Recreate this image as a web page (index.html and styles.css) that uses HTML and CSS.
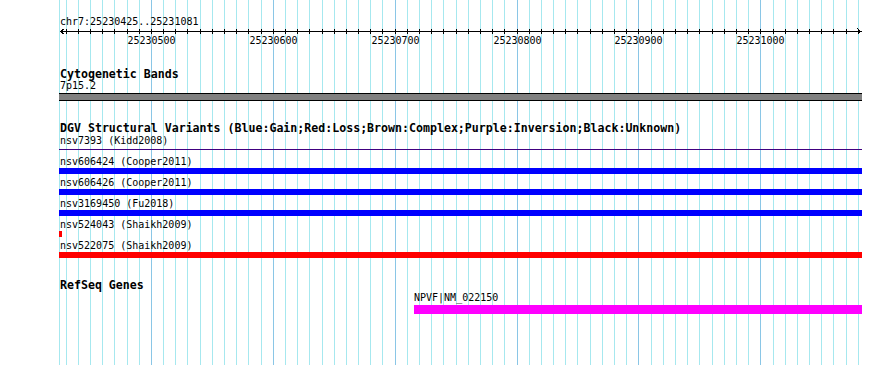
FILE: index.html
```html
<!DOCTYPE html>
<html lang="en">
<head>
    <meta charset="UTF-8">
    <title>chr7:25230425..25231081</title>
    <link rel="stylesheet" href="styles.css">
</head>
<body>
    <div class="view">
        <!-- grid behind all tracks, one line per 10 bp -->
        <svg class="grid" width="890" height="365">
            <path class="minor" d="M59.5 0V365M66.5 0V365M78.5 0V365M90.5 0V365M102.5 0V365M114.5 0V365M127.5 0V365M139.5 0V365M163.5 0V365M175.5 0V365M187.5 0V365M200.5 0V365M212.5 0V365M224.5 0V365M236.5 0V365M248.5 0V365M261.5 0V365M285.5 0V365M297.5 0V365M309.5 0V365M322.5 0V365M334.5 0V365M346.5 0V365M358.5 0V365M370.5 0V365M382.5 0V365M407.5 0V365M419.5 0V365M431.5 0V365M443.5 0V365M456.5 0V365M468.5 0V365M480.5 0V365M492.5 0V365M504.5 0V365M529.5 0V365M541.5 0V365M553.5 0V365M565.5 0V365M577.5 0V365M590.5 0V365M602.5 0V365M614.5 0V365M626.5 0V365M651.5 0V365M663.5 0V365M675.5 0V365M687.5 0V365M699.5 0V365M712.5 0V365M724.5 0V365M736.5 0V365M748.5 0V365M773.5 0V365M785.5 0V365M797.5 0V365M809.5 0V365M821.5 0V365M833.5 0V365M846.5 0V365M858.5 0V365"/>
            <path class="major" d="M151.5 0V365M273.5 0V365M395.5 0V365M517.5 0V365M638.5 0V365M760.5 0V365"/>
        </svg>

        <div class="tracks">
            <div class="locus">chr7:25230425..25231081</div>

            <svg class="ruler" width="803" height="18">
                <path d="M1 3.5H803"/>
                <path d="M7.5 1V6M19.5 1V6M31.5 1V6M43.5 1V6M55.5 1V6M68.5 1V6M80.5 1V6M92.5 1V6M104.5 1V6M116.5 1V6M128.5 1V6M141.5 1V6M153.5 1V6M165.5 1V6M177.5 1V6M189.5 1V6M202.5 1V6M214.5 1V6M226.5 1V6M238.5 1V6M250.5 1V6M263.5 1V6M275.5 1V6M287.5 1V6M299.5 1V6M311.5 1V6M323.5 1V6M336.5 1V6M348.5 1V6M360.5 1V6M372.5 1V6M384.5 1V6M397.5 1V6M409.5 1V6M421.5 1V6M433.5 1V6M445.5 1V6M458.5 1V6M470.5 1V6M482.5 1V6M494.5 1V6M506.5 1V6M518.5 1V6M531.5 1V6M543.5 1V6M555.5 1V6M567.5 1V6M579.5 1V6M592.5 1V6M604.5 1V6M616.5 1V6M628.5 1V6M640.5 1V6M653.5 1V6M665.5 1V6M677.5 1V6M689.5 1V6M701.5 1V6M714.5 1V6M726.5 1V6M738.5 1V6M750.5 1V6M762.5 1V6M774.5 1V6M787.5 1V6M799.5 1V6"/>
                <polyline points="5.5,0.5 1.5,3.5 5.5,6.5"/>
                <polyline points="798.5,0.5 801.5,3.5 798.5,6.5"/>
                <text x="92.5" y="16">25230500</text>
                <text x="214.5" y="16">25230600</text>
                <text x="336.5" y="16">25230700</text>
                <text x="458.5" y="16">25230800</text>
                <text x="579.5" y="16">25230900</text>
                <text x="701.5" y="16">25231000</text>
            </svg>

            <section class="track cyto">
                <h2 class="track-title">Cytogenetic Bands</h2>
                <div class="feat-label">7p15.2</div>
                <div class="band"></div>
            </section>

            <section class="track dgv">
                <h2 class="track-title">DGV Structural Variants (Blue:Gain;Red:Loss;Brown:Complex;Purple:Inversion;Black:Unknown)</h2>
                <div class="variant">
                    <div class="feat-label">nsv7393 (Kidd2008)</div>
                    <div class="bar inversion"></div>
                </div>
                <div class="variant">
                    <div class="feat-label">nsv606424 (Cooper2011)</div>
                    <div class="bar gain"></div>
                </div>
                <div class="variant">
                    <div class="feat-label">nsv606426 (Cooper2011)</div>
                    <div class="bar gain"></div>
                </div>
                <div class="variant">
                    <div class="feat-label">nsv3169450 (Fu2018)</div>
                    <div class="bar gain"></div>
                </div>
                <div class="variant">
                    <div class="feat-label">nsv524043 (Shaikh2009)</div>
                    <div class="bar loss" style="width: 3px"></div>
                </div>
                <div class="variant">
                    <div class="feat-label">nsv522075 (Shaikh2009)</div>
                    <div class="bar loss"></div>
                </div>
            </section>

            <section class="track refseq">
                <h2 class="track-title">RefSeq Genes</h2>
                <div class="gene" style="margin-left: 355px">
                    <div class="feat-label">NPVF|NM_022150</div>
                    <div class="bar transcript"></div>
                </div>
            </section>
        </div>
    </div>
</body>
</html>
```

FILE: styles.css
```css
* { margin: 0; padding: 0; box-sizing: border-box; }
body { background: #ffffff; color: #000000; font-family: "DejaVu Sans Mono", "Liberation Mono", monospace; }

.view { position: relative; width: 890px; height: 365px; overflow: hidden; }

/* background grid */
.grid { position: absolute; top: 0; left: 0; z-index: 0; shape-rendering: crispEdges; }
.grid path { fill: none; stroke-width: 1; }
.grid .minor { stroke: #a6e8ef; }
.grid .major { stroke: #8ac6e6; }

.tracks { position: relative; z-index: 1; width: 803px; margin-left: 59px; padding-top: 16px; }

.locus { font-size: 10px; line-height: 12px; padding-left: 1px; white-space: nowrap; }

/* ruler */
.ruler { display: block; shape-rendering: crispEdges; overflow: visible; }
.ruler path, .ruler polyline { fill: none; stroke: #000000; stroke-width: 1; }
.ruler text { font-family: "DejaVu Sans Mono", monospace; font-size: 10px; text-anchor: middle; fill: #000000; }

/* tracks */
.track-title { font-size: 11.6px; line-height: 11px; font-weight: bold; padding-left: 1px; margin-bottom: 1px; white-space: nowrap; }
.feat-label { font-size: 10px; line-height: 12px; padding-left: 1px; white-space: nowrap; }

.cyto { margin-top: 23px; }
.cyto .track-title { margin-bottom: 0; }
.band { height: 8px; margin-top: 1px; background: #808080; border-top: 1px solid #000000; border-bottom: 1px solid #000000; }

.dgv { margin-top: 22px; }
.variant { padding-bottom: 3px; }
.bar { height: 6px; }
.bar.gain { background: #0000ff; }
.bar.loss { background: #ff0000; }
.bar.inversion { background: linear-gradient(#400080, #400080) 0 2px / 100% 1px no-repeat; }

.refseq { margin-top: 19px; }
.gene .feat-label { padding-left: 0; }
.bar.transcript { height: 9px; margin-top: 1px; background: #ff00ff; }
```
